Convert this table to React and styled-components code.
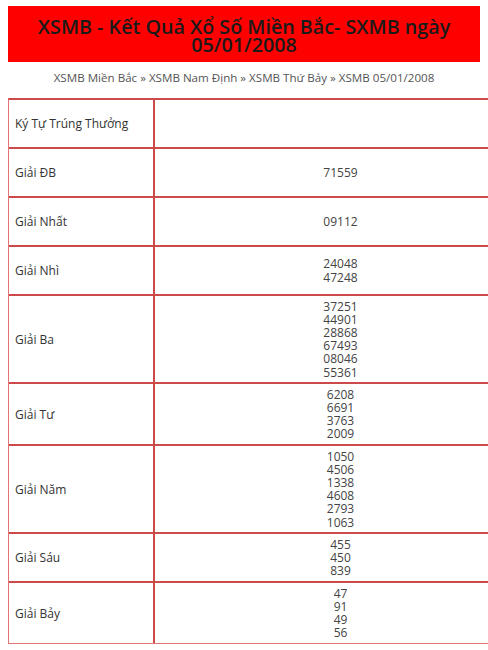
import React from 'react';
import styled, { createGlobalStyle } from 'styled-components';

const GlobalStyle = createGlobalStyle`
  html, body {
    margin: 0;
    padding: 0;
    overflow: hidden;
    background: #fff;
  }
  body {
    font-family: "Open Sans", "Noto Sans", sans-serif;
  }
`;

const Page = styled.div`
  padding: 6px 0 0 8px;
`;

const Title = styled.h1`
  margin: 0 8px 0 0;
  padding: 12px 8px 8px;
  background: #ff0000;
  color: #1a1a1a;
  font-size: 19.7px;
  line-height: 18px;
  font-weight: 600;
  text-align: center;
`;

const Crumbs = styled.div`
  margin: 5px 8px 0 0;
  height: 21px;
  color: #555;
  font-size: 11.6px;
  line-height: 21px;
  text-align: center;
`;

const Table = styled.table`
  margin-top: 10px;
  width: 518px;
  border-collapse: separate;
  border-spacing: 0;
  border: 1px solid #e57373;
  border-top: 2px solid #cc4a4a;
  border-right: 0;
  font-size: 12px;
`;

const Row = styled.tr`
  & + & td {
    border-top: 2px solid #cc4a4a;
  }
`;

const Label = styled.td`
  width: 132px;
  height: 40px;
  padding: 3.5px 6px;
  border-right: 2px solid #cc4a4a;
  color: #333;
  font-weight: 500;
  text-align: left;
  vertical-align: middle;
`;

const Numbers = styled.td`
  padding: 3.5px 6px;
  color: #444;
  line-height: 13.2px;
  text-align: center;
  vertical-align: middle;
`;

const Num = styled.div``;

const results = [
  ['Ký Tự Trúng Thưởng', []],
  ['Giải ĐB', ['71559']],
  ['Giải Nhất', ['09112']],
  ['Giải Nhì', ['24048', '47248']],
  ['Giải Ba', ['37251', '44901', '28868', '67493', '08046', '55361']],
  ['Giải Tư', ['6208', '6691', '3763', '2009']],
  ['Giải Năm', ['1050', '4506', '1338', '4608', '2793', '1063']],
  ['Giải Sáu', ['455', '450', '839']],
  ['Giải Bảy', ['47', '91', '49', '56']]
];

export default function App() {
  return (
    <Page>
      <GlobalStyle />
      <Title>XSMB - Kết Quả Xổ Số Miền Bắc- SXMB ngày 05/01/2008</Title>
      <Crumbs>XSMB Miền Bắc » XSMB Nam Định » XSMB Thứ Bảy » XSMB 05/01/2008</Crumbs>
      <Table>
        <tbody>
          {results.map(([name, nums]) => (
            <Row key={name}>
              <Label>{name}</Label>
              <Numbers>
                {nums.map((n, i) => <Num key={i}>{n}</Num>)}
              </Numbers>
            </Row>
          ))}
        </tbody>
      </Table>
    </Page>
  );
}
